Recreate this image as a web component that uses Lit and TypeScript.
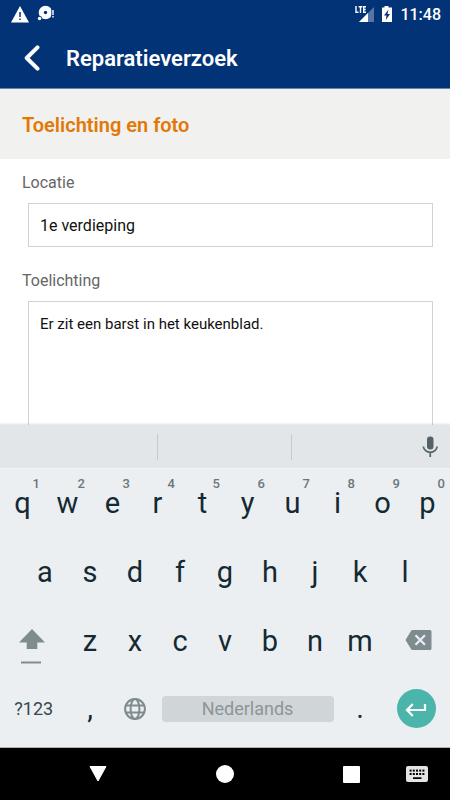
import { LitElement, html, css, svg } from "lit";
import { customElement, property, state } from "lit/decorators.js";

@customElement("status-bar")
export class StatusBar extends LitElement {
  static styles = css`
    :host {
      display: flex;
      align-items: center;
      justify-content: space-between;
      height: 28px;
      padding: 0 9px 0 11px;
      color: #fff;
      font-size: 16px;
      font-weight: 500;
    }
    .group {
      display: flex;
      align-items: center;
      gap: 8px;
    }
    .signals {
      gap: 7px;
    }
    svg {
      display: block;
    }
  `;

  render() {
    return html`
      <div class="group">
        <svg width="18" height="20" viewBox="0 0 18 20" aria-hidden="true">
          <path d="M9 2 18 18.500H0z" fill="#fff" />
          <path d="M8.3 8h1.500v5H8.3zM8.3 14.500h1.500v1.600H8.3z" fill="#023377" />
        </svg>
        <svg width="18" height="20" viewBox="0 0 18 20" aria-hidden="true">
          <circle cx="8.5" cy="8.500" r="6.800" fill="#fff" />
          <circle cx="8.5" cy="8.500" r="1.700" fill="#023377" />
          <circle cx="2.600" cy="14.500" r="2.600" fill="#023377" />
          <circle cx="2.600" cy="14.500" r="1.800" fill="#fff" />
          <path d="M14.300 3h3v11h-3z" fill="#023377" />
          <path d="M15.300 6h1.400v5h-1.400zM15.300 12h1.400v1.600h-1.400z" fill="#fff" />
        </svg>
      </div>
      <div class="group signals">
        <svg width="20" height="18" viewBox="0 0 20 18" aria-hidden="true">
          <path d="M20 2v15H5z" fill="#5577a5" />
          <path d="M14 8v9H5z" fill="#fff" />
          <path
            d="M2 1v6.300h2.500M4.600 1.700h3.800M6.500 1.700V8M12 1.700H9.700V7.300H12M9.700 4.500h2"
            fill="none"
            stroke="#fff"
            stroke-width="1.4"
          />
        </svg>
        <svg width="12" height="18" viewBox="0 0 12 18" aria-hidden="true">
          <path d="M3.500 1h4v1.500H11V17H1V2.500h2.500z" fill="#fff" />
          <path d="M7.500 4.500 3 10.500h2.500L4.800 15 9 9H6.500z" fill="#023377" />
        </svg>
        <span>11:48</span>
      </div>
    `;
  }
}

@customElement("repair-form")
export class RepairForm extends LitElement {
  @state() private location = "1e verdieping";
  @state() private note = "Er zit een barst in het keukenblad.";

  static styles = css`
    :host {
      display: block;
      overflow: hidden;
      background: #fff;
    }
    .banner {
      margin: 0;
      padding: 2px 22px 0;
      background: #f1f1ef;
      color: #e37806;
      font-size: 20px;
      line-height: 68px;
      font-weight: 600;
    }
    .fields {
      display: flex;
      flex-direction: column;
      padding: 12px 17px 0 22px;
    }
    label {
      color: #666;
      font-size: 16px;
      line-height: 24px;
    }
    input,
    textarea {
      box-sizing: border-box;
      margin: 8px 0 22px 6px;
      padding: 0 11px;
      border: 1px solid #d2d2d2;
      border-radius: 0;
      outline: none;
      background: #fff;
      color: #111;
      font-family: inherit;
    }
    input {
      height: 44px;
      font-size: 16px;
    }
    textarea {
      height: 180px;
      padding-top: 12px;
      resize: none;
      font-size: 15px;
      line-height: 20px;
    }
  `;

  render() {
    return html`
      <h2 class="banner">Toelichting en foto</h2>
      <form class="fields">
        <label for="location">Locatie</label>
        <input
          id="location"
          type="text"
          .value=${this.location}
          @input=${(e: Event) => (this.location = (e.target as HTMLInputElement).value)}
        />
        <label for="note">Toelichting</label>
        <textarea
          id="note"
          .value=${this.note}
          @input=${(e: Event) => (this.note = (e.target as HTMLTextAreaElement).value)}
        ></textarea>
      </form>
    `;
  }
}

@customElement("letter-key")
export class LetterKey extends LitElement {
  @property() letter = "";
  @property() hint = "";

  static styles = css`
    :host {
      display: flex;
      flex: 1 1 0;
      min-width: 0;
    }
    button {
      position: relative;
      flex: 1;
      min-width: 0;
      padding: 0 0 2px;
      border: 0;
      background: none;
      color: #142a33;
      font: 400 29px/34px Roboto, sans-serif;
    }
    .hint {
      position: absolute;
      top: 7px;
      right: 5px;
      color: #6b777c;
      font-size: 13px;
      line-height: 16px;
      font-weight: 500;
    }
  `;

  render() {
    return html`<button type="button">
      ${this.letter}${this.hint ? html`<span class="hint">${this.hint}</span>` : ""}
    </button>`;
  }
}

@customElement("soft-keyboard")
export class SoftKeyboard extends LitElement {
  static styles = css`
    :host {
      display: block;
      background: #eceff1;
      padding-bottom: 6px;
      border-bottom: 1px solid #b0b3b5;
      box-shadow: 0 -1px 2px rgba(0, 0, 0, 0.12);
      position: relative;
    }
    .suggestions {
      display: grid;
      grid-template-columns: 24fr 134fr 134fr 134fr 24fr;
      align-items: center;
      height: 43px;
      background: #e2e6e9;
      border-bottom: 1px solid #f2f4f5;
    }
    .slot {
      height: 26px;
    }
    .divided {
      border-right: 1px solid #c5cacd;
    }
    .suggestions button {
      grid-column: 5;
      justify-self: end;
      margin-right: 8px;
    }
    .row {
      display: flex;
      height: 69px;
    }
    .inset {
      padding: 0 5%;
    }
    .last {
      height: 65px;
    }
    button {
      display: flex;
      align-items: center;
      justify-content: center;
      min-width: 0;
      padding: 0;
      border: 0;
      background: none;
      color: #37474f;
      font: 400 18px/24px Roboto, sans-serif;
    }
    svg {
      display: block;
      flex: none;
    }
    .wide {
      flex: 0 0 15%;
    }
    .start {
      box-sizing: border-box;
      padding: 10px 4px 0 0;
    }
    .end {
      box-sizing: border-box;
      padding: 0 0 4px 4px;
    }
    .narrow {
      flex: 0 0 10%;
    }
    .space {
      flex: 1;
      align-self: center;
      height: 26px;
      margin: 0 4px;
      border-radius: 4px;
      background: #d0d5d8;
      color: #8c9599;
    }
    .enter-disc {
      display: flex;
      align-items: center;
      justify-content: center;
      flex: none;
      width: 39px;
      height: 39px;
      border-radius: 50%;
      background: #4cb5ab;
    }
  `;

  private top = "qwertyuiop";
  private home = "asdfghjkl";
  private bottom = "zxcvbnm";

  private letters(text: string, hints = "") {
    return [...text].map(
      (c, i) => html`<letter-key .letter=${c} .hint=${hints[i] ?? ""}></letter-key>`,
    );
  }

  render() {
    return html`
      <div class="suggestions">
        <span class="slot"></span>
        <span class="slot divided"></span>
        <span class="slot divided"></span>
        <button type="button" aria-label="Spraakinvoer">
          <svg width="24" height="24" viewBox="0 0 24 24">
            <rect x="9" y="1.500" width="6.500" height="13" rx="3" fill="#546268" />
            <path
              d="M5.300 11.500a7 6.600 0 0 0 13.900 0M12.250 18v4"
              fill="none"
              stroke="#546268"
              stroke-width="1.700"
            />
          </svg>
        </button>
      </div>
      <div class="row">${this.letters(this.top, "1234567890")}</div>
      <div class="row inset">${this.letters(this.home)}</div>
      <div class="row">
        <button class="wide start" type="button" aria-label="Shift">
          <svg width="26" height="36" viewBox="0 0 26 36">
            <path d="M13 0 26 13.500h-7.700V20H7.700v-6.500H0z" fill="#7f8b8f" />
            <path d="M2 32.500h20v2H2z" fill="#7f8b8f" />
          </svg>
        </button>
        ${this.letters(this.bottom)}
        <button class="wide end" type="button" aria-label="Wissen">
          <svg width="27" height="20" viewBox="0 0 27 20">
            <path
              d="M7.500 0H25a1.500 1.500 0 0 1 1.500 1.500v17A1.500 1.500 0 0 1 25 20H7.500Q6.500 20 6 19L.5 10 6 1Q6.500 0 7.500 0z"
              fill="#7f8b8f"
            />
            <path d="m10.500 5.300 9.400 9.400m0-9.400-9.400 9.400" stroke="#eceff1" stroke-width="2.200" />
          </svg>
        </button>
      </div>
      <div class="row last">
        <button class="wide" type="button">?123</button>
        <letter-key class="narrow" .letter=${","}></letter-key>
        <button class="narrow" type="button" aria-label="Taal wisselen">
          <svg width="22" height="22" viewBox="0 0 22 22">
            <g fill="none" stroke="#7f8b8f" stroke-width="2">
              <circle cx="11" cy="11" r="9.900" />
              <ellipse cx="11" cy="11" rx="4.400" ry="9.900" />
              <path d="M2 7.600h18M2 14.400h18" />
            </g>
          </svg>
        </button>
        <button class="space" type="button">Nederlands</button>
        <letter-key class="narrow" .letter=${"."}></letter-key>
        <button class="wide" type="button" aria-label="Enter">
          <span class="enter-disc">
            <svg width="22" height="16" viewBox="0 0 22 16">
              <path
                d="M20 3v6H2M7.800 3 2 9l5.800 6"
                fill="none"
                stroke="#fff"
                stroke-width="2.200"
              />
            </svg>
          </span>
        </button>
      </div>
    `;
  }
}

@customElement("system-nav")
export class SystemNav extends LitElement {
  static styles = css`
    :host {
      display: grid;
      grid-template-columns: 196fr 58fr 65fr 65fr 66fr;
      height: 52px;
      background: #000;
    }
    button {
      display: flex;
      align-items: center;
      justify-content: center;
      padding: 0;
      border: 0;
      background: none;
    }
    .recent {
      grid-column: 4;
    }
    svg {
      display: block;
    }
  `;

  private keyDots() {
    const dots = [];
    for (let r = 0; r < 2; r++) {
      for (let c = 0; c < 5; c++) {
        dots.push(svg`<rect x=${3.6 + c * 3.2} y=${3.6 + r * 3.4} width="2" height="2" />`);
      }
    }
    return dots;
  }

  render() {
    return html`
      <button type="button" aria-label="Terug">
        <svg width="18" height="16" viewBox="0 0 18 16">
          <path d="M1 .5h16L9 15z" fill="#fff" stroke="#fff" stroke-linejoin="round" />
        </svg>
      </button>
      <button type="button" aria-label="Startscherm">
        <svg width="18" height="18" viewBox="0 0 18 18">
          <circle cx="9" cy="9" r="9" fill="#fff" />
        </svg>
      </button>
      <button class="recent" type="button" aria-label="Recente apps">
        <svg width="17" height="17" viewBox="0 0 17 17">
          <rect width="17" height="17" rx="1" fill="#fff" />
        </svg>
      </button>
      <button type="button" aria-label="Toetsenbord kiezen">
        <svg width="22" height="16" viewBox="0 0 22 16">
          <rect width="22" height="16" rx="2" fill="#e4e4e4" />
          ${this.keyDots()}
          <rect x="7" y="11.300" width="8.500" height="1.700" />
        </svg>
      </button>
    `;
  }
}

@customElement("app-root")
export class AppRoot extends LitElement {
  static styles = css`
    :host {
      display: flex;
      flex-direction: column;
      height: 100vh;
      background: #fff;
      font-family: Roboto, sans-serif;
    }
    .top {
      flex: none;
      background: #023377;
      border-bottom: 1px solid #6d80a8;
    }
    .app-bar {
      display: flex;
      align-items: center;
      gap: 26px;
      height: 60px;
      padding: 0 24px;
    }
    .back {
      display: flex;
      padding: 0;
      border: 0;
      background: none;
    }
    h1 {
      margin: 0;
      padding-top: 2px;
      color: #fff;
      font-size: 22px;
      line-height: 28px;
      font-weight: 600;
    }
    repair-form {
      flex: 1 1 0;
      min-height: 0;
    }
    soft-keyboard,
    system-nav {
      flex: none;
    }
  `;

  render() {
    return html`
      <header class="top">
        <status-bar></status-bar>
        <div class="app-bar">
          <button class="back" type="button" aria-label="Terug">
            <svg width="16" height="26" viewBox="0 0 16 26">
              <path
                d="M13.500 2.300 2.700 13l10.800 10.700"
                fill="none"
                stroke="#fff"
                stroke-width="4"
                stroke-linecap="round"
                stroke-linejoin="round"
              />
            </svg>
          </button>
          <h1>Reparatieverzoek</h1>
        </div>
      </header>
      <repair-form></repair-form>
      <soft-keyboard></soft-keyboard>
      <system-nav></system-nav>
    `;
  }
}
